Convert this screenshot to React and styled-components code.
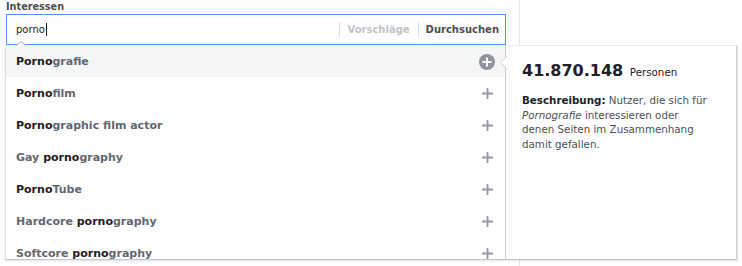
import React from 'react';
import styled, { createGlobalStyle } from 'styled-components';

const Global = createGlobalStyle`
  html, body { margin: 0; padding: 0; background: #fff; }
  body {
    font-family: "DejaVu Sans", "Noto Sans", sans-serif;
    width: 742px;
    height: 266px;
    overflow: hidden;
  }
`;

const Page = styled.div`
  display: flex;
  height: 266px;
`;

const Column = styled.div`
  width: 520px;
  box-sizing: border-box;
  border-right: 1px solid #e5e6e9;
  padding-left: 6px;
  height: 266px;
`;

const Label = styled.div`
  font-weight: bold;
  font-size: 9.7px;
  color: #4b4f56;
  height: 14px;
  line-height: 13px;
`;

const Field = styled.div`
  position: relative;
  width: 500px;
`;

const InputBox = styled.div`
  box-sizing: border-box;
  height: 31px;
  border: 1px solid #5890ff;
  display: flex;
  align-items: center;
  padding: 0 6px 0 9px;
  background: #fff;
`;

const Query = styled.div`
  flex: 1;
  font-size: 10px;
  color: #1d2129;
  display: flex;
  align-items: center;
`;

const Caret = styled.span`
  display: inline-block;
  width: 1px;
  height: 13px;
  background: #1d2129;
  margin-left: 1px;
`;

const Divider = styled.span`
  width: 1px;
  height: 15px;
  background: #dddfe2;
`;

const Action = styled.span`
  font-size: 10px;
  font-weight: bold;
  color: ${(p) => (p.$muted ? '#bec3c9' : '#4b4f56')};
  margin: 0 ${(p) => (p.$muted ? '8px' : '0')} 0 7px;
`;

const Flyout = styled.div`
  position: absolute;
  top: 100%;
  left: -1px;
  display: flex;
  z-index: 2;
`;

const List = styled.div`
  position: relative;
  width: 501px;
  height: 215px;
  box-sizing: border-box;
  border-left: 1px solid #dddfe2;
  border-right: 1px solid #ccd0d5;
  border-bottom: 1px solid #c4c7cc;
  box-shadow: 0 1px 2px rgba(0, 0, 0, 0.12);
  background: #fff;
  display: flex;
  flex-direction: column;
`;

const Rows = styled.div`
  flex: 1;
  overflow: hidden;
`;

const Notch = styled.svg`
  position: absolute;
  top: -4px;
  left: 10px;
`;

const Row = styled.div`
  display: flex;
  align-items: center;
  justify-content: space-between;
  height: 32px;
  padding: 1px 10px 0 10px;
  box-sizing: border-box;
  background: ${(p) => (p.$active ? '#f5f6f7' : '#fff')};
`;

const Name = styled.span`
  font-size: 11px;
  font-weight: bold;
  color: #616770;
`;

const Match = styled.span`
  color: #1d2129;
`;

const IconBox = styled.span`
  width: 16px;
  height: 16px;
  display: flex;
  align-items: center;
  justify-content: center;
`;

const Panel = styled.div`
  position: relative;
  width: 231px;
  height: 215px;
  box-sizing: border-box;
  background: #fff;
  border-top: 1px solid #e9ebee;
  border-right: 1px solid #ccd0d5;
  border-bottom: 1px solid #c4c7cc;
  box-shadow: 1px 1px 2px rgba(0, 0, 0, 0.12);
  padding: 15px 16px 0 16px;
`;

const Pointer = styled.svg`
  position: absolute;
  left: -6px;
  top: 10px;
`;

const Count = styled.div`
  font-size: 16px;
  line-height: 20px;
  font-weight: bold;
  color: #1d2129;
`;

const Unit = styled.span`
  font-size: 10.3px;
  font-weight: normal;
  line-height: 1;
  margin-left: 1px;
`;

const Description = styled.p`
  margin: 12px 0 0;
  width: 190px;
  font-size: 10.3px;
  line-height: 14.5px;
  color: #4b4f56;
  b { color: #1d2129; }
`;

const Below = styled.div`
  margin-top: 219px;
  padding-left: 14px;
  font-size: 11px;
  color: #4b4f56;
`;

const CirclePlus = () => (
  <svg width="16" height="16" viewBox="0 0 16 16">
    <circle cx="8" cy="8" r="8" fill="#8d949e" />
    <path d="M8 3.5v9M3.5 8h9" stroke="#fff" strokeWidth="2" />
  </svg>
);

const Plus = () => (
  <svg width="11" height="11" viewBox="0 0 11 11">
    <path d="M5.5 0v11M0 5.5h11" stroke="#9197a3" strokeWidth="1.8" />
  </svg>
);

const suggestions = [
  ['', 'Porno', 'grafie'],
  ['', 'Porno', 'film'],
  ['', 'Porno', 'graphic film actor'],
  ['Gay ', 'porno', 'graphy'],
  ['', 'Porno', 'Tube'],
  ['Hardcore ', 'porno', 'graphy'],
  ['Softcore ', 'porno', 'graphy'],
];

export default function App() {
  return (
    <>
      <Global />
      <Page>
        <Column>
          <Label>Interessen</Label>
          <Field>
            <InputBox>
              <Query>
                porno
                <Caret />
              </Query>
              <Divider />
              <Action $muted>Vorschläge</Action>
              <Divider />
              <Action>Durchsuchen</Action>
            </InputBox>
            <Flyout>
              <List>
                <Notch width="10" height="5" viewBox="0 0 10 5">
                  <polygon points="0,5 5,0.5 10,5" fill="#f5f6f7" />
                  <polyline points="0,4.5 5,0.5 10,4.5" fill="none" stroke="#b4b9c1" strokeWidth="1" />
                </Notch>
                <Rows>
                  {suggestions.map(([pre, match, post], i) => (
                    <Row key={i} $active={i === 0}>
                      <Name>
                        {pre}
                        <Match>{match}</Match>
                        {post}
                      </Name>
                      <IconBox>{i === 0 ? <CirclePlus /> : <Plus />}</IconBox>
                    </Row>
                  ))}
                </Rows>
              </List>
              <Panel>
                <Pointer width="7" height="13" viewBox="0 0 7 13">
                  <polygon points="7,0 0.5,6.5 7,13" fill="#fff" />
                  <polyline points="7,0 0.5,6.5 7,13" fill="none" stroke="#ccd0d5" strokeWidth="1" />
                </Pointer>
                <Count>
                  41.870.148 <Unit>Personen</Unit>
                </Count>
                <Description>
                  <b>Beschreibung:</b> Nutzer, die sich für <i>Pornografie</i> interessieren oder denen Seiten im Zusammenhang damit gefallen.
                </Description>
              </Panel>
            </Flyout>
          </Field>
          <Below>Verhaltensweisen</Below>
        </Column>
      </Page>
    </>
  );
}
